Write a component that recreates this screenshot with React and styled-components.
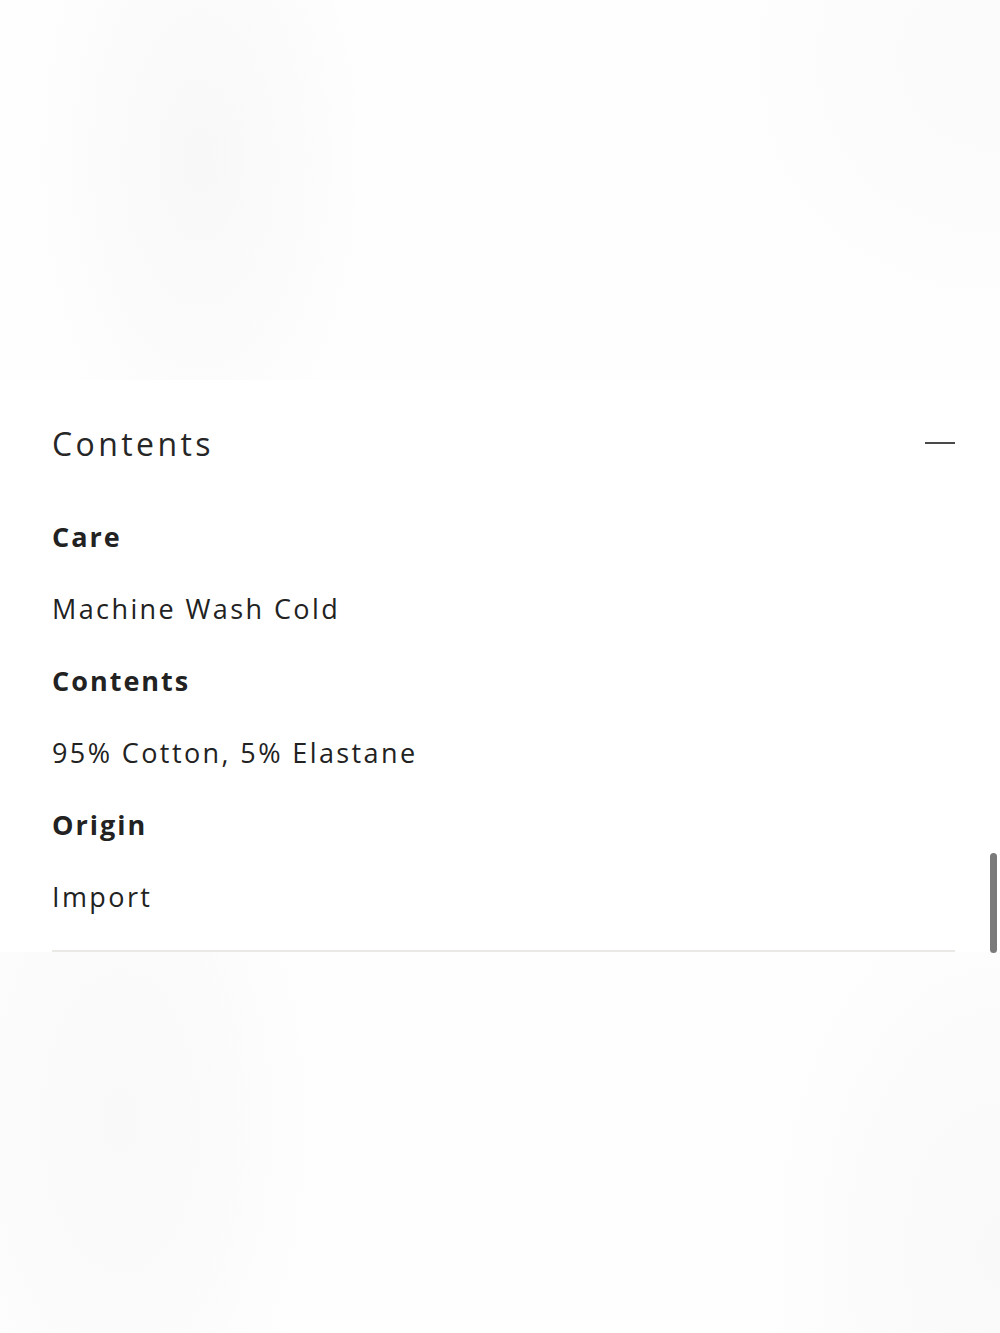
import React from "react";
import styled, { createGlobalStyle } from "styled-components";

const GlobalStyle = createGlobalStyle`
  html, body {
    margin: 0;
    padding: 0;
    background: #ffffff;
  }
  body {
    font-family: "Open Sans", "Liberation Sans", sans-serif;
    color: #222222;
  }
`;

const Page = styled.div`
  position: relative;
  width: 1000px;
  height: 1333px;
  overflow: hidden;
  display: flex;
  flex-direction: column;
`;

const Backdrop = styled.div`
  height: ${(props) => props.height}px;
  flex-shrink: 0;
  background: ${(props) => props.bg};
`;

const Panel = styled.section`
  background: #ffffff;
  padding: 0 45px 0 52px;
`;

const Header = styled.div`
  display: flex;
  align-items: center;
  justify-content: space-between;
  height: 116px;
  padding-top: 5px;
`;

const Title = styled.h2`
  margin: 0;
  font-size: 32px;
  font-weight: 400;
  letter-spacing: 3.4px;
  color: #262626;
`;

const Minus = styled.span`
  display: block;
  width: 30px;
  height: 2px;
  background: #4a4a4a;
`;

const Details = styled.dl`
  margin: 0;
  padding-bottom: 17px;
  border-bottom: 2px solid #ebe9e6;
`;

const Label = styled.dt`
  font-size: 27px;
  font-weight: 700;
  letter-spacing: 2px;
  line-height: 72px;
  color: #222222;
`;

const Value = styled.dd`
  margin: 0;
  font-size: 27px;
  font-weight: 400;
  letter-spacing: 2.4px;
  line-height: 72px;
  color: #222222;
`;

const Scrollbar = styled.div`
  position: absolute;
  right: 3px;
  top: 853px;
  width: 7px;
  height: 100px;
  border-radius: 4px;
  background: #7a7a7a;
`;

const topBg = `
  radial-gradient(ellipse 170px 330px at 200px 160px, #f8f8f8 0%, #fbfbfb 55%, rgba(255,255,255,0) 100%),
  radial-gradient(ellipse 260px 260px at 990px 60px, #fbfbfb 0%, #fcfcfc 60%, rgba(255,255,255,0) 100%),
  #fefefe
`;

const bottomBg = `
  radial-gradient(ellipse 200px 380px at 120px 170px, #f9f9f9 0%, #fbfbfb 55%, rgba(255,255,255,0) 100%),
  radial-gradient(ellipse 240px 380px at 1000px 300px, #f9f9f9 0%, #fbfbfb 55%, rgba(255,255,255,0) 100%),
  #fefefe
`;

const rows = [
  { label: "Care", value: "Machine Wash Cold" },
  { label: "Contents", value: "95% Cotton, 5% Elastane" },
  { label: "Origin", value: "Import" },
];

export default function App() {
  return (
    <Page>
      <GlobalStyle />
      <Backdrop height={380} bg={topBg} />
      <Panel>
        <Header>
          <Title>Contents</Title>
          <Minus />
        </Header>
        <Details>
          {rows.map((row) => (
            <React.Fragment key={row.label}>
              <Label>{row.label}</Label>
              <Value>{row.value}</Value>
            </React.Fragment>
          ))}
        </Details>
      </Panel>
      <Backdrop height={400} bg={bottomBg} />
      <Scrollbar />
    </Page>
  );
}
